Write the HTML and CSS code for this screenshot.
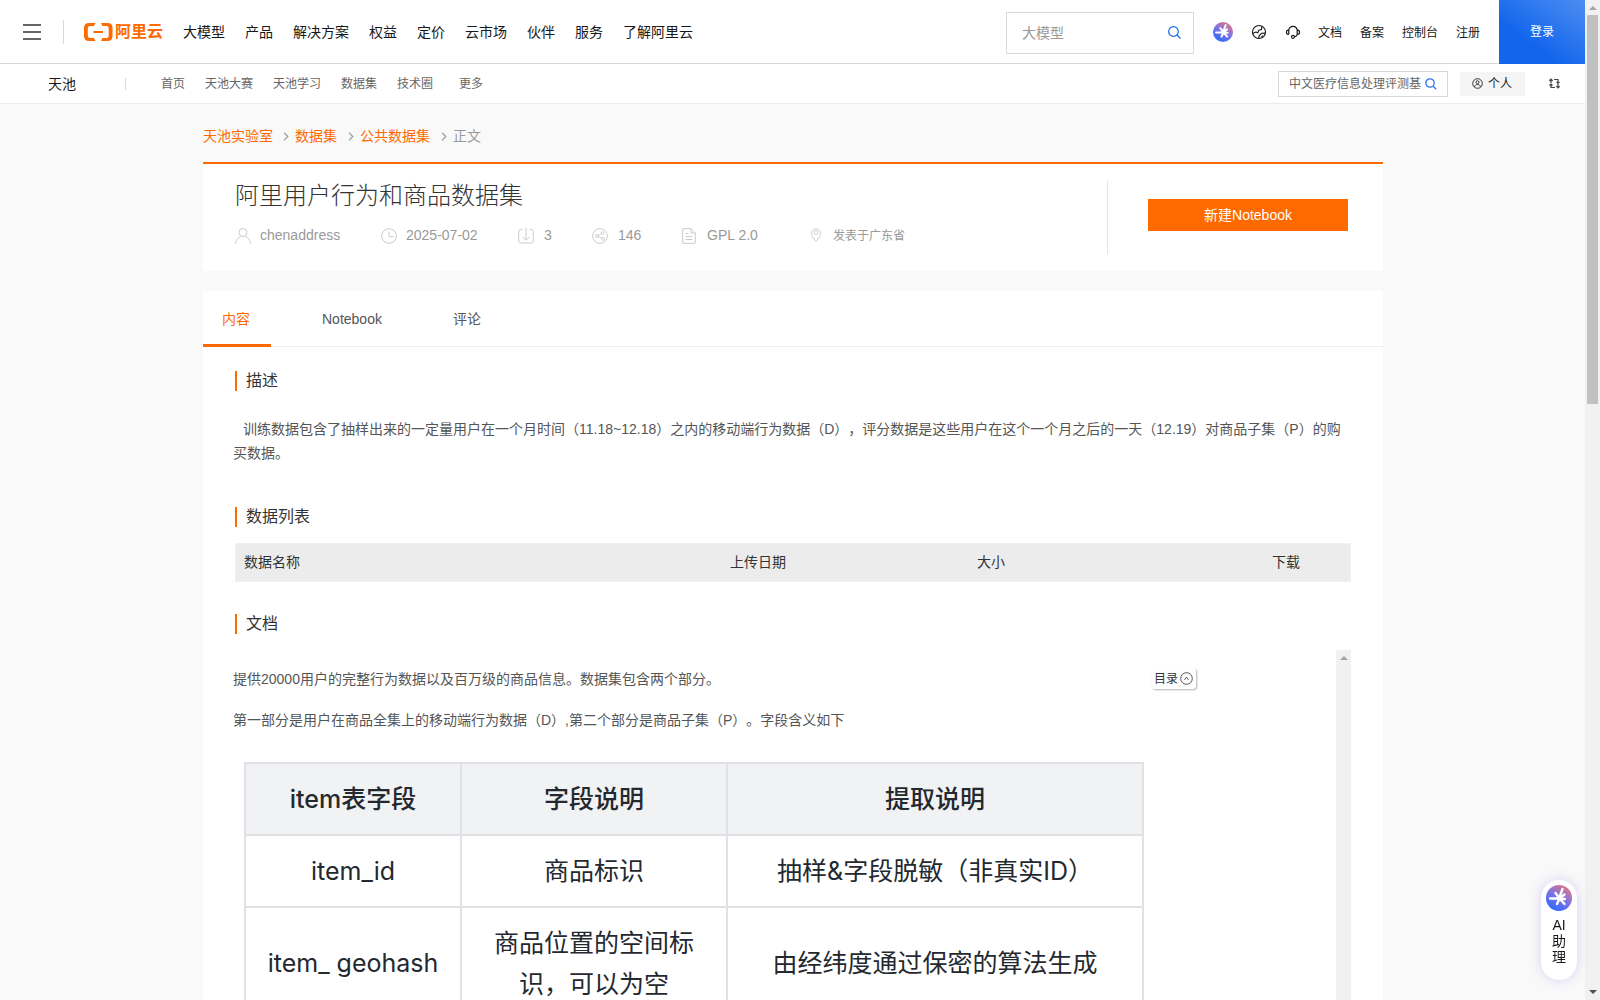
FILE: index.html
```html
<!DOCTYPE html>
<html lang="zh-CN">
<head>
  <meta charset="UTF-8" />
  <meta name="viewport" content="width=device-width, initial-scale=1.0"/>
  <title>阿里用户行为和商品数据集_数据集-阿里云天池</title>
  <link rel="stylesheet" href="styles.css">
</head>
<body>

  <div class="page">
    <header class="topbar">
      <div class="menu-btn"><i></i><i></i><i></i></div>
      <span class="topbar-line"></span>
      <a class="logo">
        <svg width="29" height="18" viewBox="0 0 29 18">
          <path d="M11.500 0L10 3H6Q3.800 3 3.800 5.200v7.600Q3.800 15 6 15h4l1.500 3H5Q0 18 0 13V5Q0 0 5 0zM17 0l1.500 3h4q2.200 0 2.200 2.200v7.600q0 2.200-2.200 2.200h-4L17 18h6.500q5 0 5-5V5q0-5-5-5z" fill="#ff6a00"/>
          <path d="M9.500 9h9.500" stroke="#ff6a00" stroke-width="2"/>
        </svg>
        <span>阿里云</span>
      </a>
      <nav class="main-nav">
        <a>大模型</a><a>产品</a><a>解决方案</a><a>权益</a><a>定价</a><a>云市场</a><a>伙伴</a><a>服务</a><a>了解阿里云</a>
      </nav>
      <div class="search">
        <span>大模型</span>
        <svg width="13" height="13" viewBox="0 0 13 13" fill="none" stroke="#1366ec" stroke-width="1.2"><circle cx="5.500" cy="5.500" r="4.800"/><path d="M9 9l3.500 3.500"/></svg>
      </div>
      <svg class="ai-icon" width="20" height="20" viewBox="0 0 26 26">
        <defs>
          <linearGradient id="ai" x1="0.2" y1="1" x2="0.8" y2="0">
            <stop offset="0" stop-color="#2468ff"/>
            <stop offset="0.5" stop-color="#7a73e8"/>
            <stop offset="1" stop-color="#e8757c"/>
          </linearGradient>
        </defs>
        <circle cx="13" cy="13" r="13" fill="url(#ai)"/>
        <path d="M4 13.500h9M16.500 4l-3.500 9.500M9.500 8l4 5.500 5 5.500M18.500 9.500l-5 4-2.500 5.500M13.500 13.500l5.500.5" stroke="#fff" stroke-width="2.600" stroke-linecap="round" fill="none"/>
      </svg>
      <svg class="globe" width="16" height="16" viewBox="0 0 16 16" fill="none" stroke="#181818" stroke-width="1.100"><circle cx="8" cy="8" r="6.500"/><path d="M1.800 9.500l3-1.500 2 .8 1-2.500 2.700-.8.300-3M7.500 14.500l.8-3 2.300-2.200 3.500-.2M10.500 13.200l1.200-1.500"/></svg>
      <svg class="headset" width="16" height="16" viewBox="0 0 16 16" fill="none" stroke="#181818" stroke-width="1.200"><path d="M3.800 10.300H3.200Q1.500 10.300 1.500 8.200T3.200 6.100h.6M3.800 10.300V6.500a4.200 4.200 0 0 1 8.400 0v3.800M12.200 10.300h.6q1.700 0 1.700-2.100t-1.700-2.100h-.6M12.200 10.300q-.3 1.700-2.200 2.400"/><circle cx="8" cy="12.800" r="1.500"/></svg>
      <nav class="user-nav">
        <a>文档</a><a>备案</a><a>控制台</a><a>注册</a>
      </nav>
      <a class="login">登录</a>
    </header>

    <div class="subbar">
      <a class="subbar-title">天池</a>
      <span class="subbar-line"></span>
      <nav class="sub-nav">
        <a>首页</a><a>天池大赛</a><a>天池学习</a><a>数据集</a><a>技术圈</a><a class="more">更多</a>
      </nav>
      <div class="sub-search">
        <span>中文医疗信息处理评测基</span>
        <svg width="12" height="12" viewBox="0 0 12 12" fill="none" stroke="#2d77ee" stroke-width="1.300"><circle cx="5" cy="5" r="4.200"/><path d="M8 8l3.200 3.200"/></svg>
      </div>
      <a class="personal">
        <svg width="11" height="11" viewBox="0 0 11 11" fill="none" stroke="#333"><circle cx="5.500" cy="5.500" r="4.800"/><circle cx="5.500" cy="4.200" r="1.500"/><path d="M2.500 8.800c.5-3 5.500-3 6 0"/></svg>
        <span>个人</span>
      </a>
      <svg class="switch" width="11" height="11" viewBox="0 0 11 11" fill="none" stroke="#444" stroke-width="1.200"><path d="M2 5V1.500M.3 2.800L2 1l1.700 1.800M5 1.500h4V5M2 6.500v3h4M9 6v3.500M7.300 8.200L9 10l1.700-1.800M7.500 3.800L9 5.300l1.500-1.500M.5 7.500L2 6l1.500 1.500"/></svg>
    </div>

    <main class="container">
      <div class="breadcrumb">
        <a>天池实验室</a>
        <svg width="6" height="9" viewBox="0 0 6 9"><path d="M1 .7l3.800 3.800L1 8.300"/></svg>
        <a class="wide">数据集</a>
        <svg width="6" height="9" viewBox="0 0 6 9"><path d="M1 .7l3.800 3.800L1 8.300"/></svg>
        <a class="wider">公共数据集</a>
        <svg width="6" height="9" viewBox="0 0 6 9"><path d="M1 .7l3.800 3.800L1 8.300"/></svg>
        <span>正文</span>
      </div>

      <section class="info">
        <div class="info-left">
          <h1>阿里用户行为和商品数据集</h1>
          <div class="meta">
            <span class="author"><svg width="16" height="16" viewBox="0 0 16 16"><circle cx="8" cy="4.500" r="4"/><path d="M.5 16c0-4 2.500-6.500 5-7.500M15.500 16c0-4-2.500-6.500-5-7.500"/></svg>chenaddress</span>
            <span class="date"><svg width="16" height="16" viewBox="0 0 16 16"><circle cx="8" cy="8" r="7.300"/><path d="M8 3.500v5h4.500"/></svg>2025-07-02</span>
            <span class="downloads"><svg width="16" height="16" viewBox="0 0 16 16"><path d="M4.500 1.500h-2Q.7 1.500.7 3.500V13q0 2 2 2h10.600q2 0 2-2V3.500q0-2-2-2h-1.800M8 0v12M4.500 8.800L8 12.300l3.500-3.500"/></svg>3</span>
            <span class="shares"><svg width="16" height="16" viewBox="0 0 16 16"><circle cx="8" cy="8" r="7.400"/><circle cx="5" cy="8" r="1.500"/><circle cx="10.500" cy="5" r="1.300"/><circle cx="11" cy="10.800" r="1.500"/><path d="M6.500 7.300l3-1.700M6.500 8.700l3 1.500"/></svg>146</span>
            <span class="license"><svg width="14" height="16" viewBox="0 0 14 16"><path d="M9 .6H2Q.6.6.6 2v12q0 1.400 1.400 1.400h10q1.400 0 1.400-1.400V5zM9 .6V5h4.400M3.500 5.500h3M3.500 8.500h7M3.500 11.500h7"/></svg>GPL 2.0</span>
            <span class="place"><svg width="10" height="14" viewBox="0 0 10 14"><path d="M5 13.400C2 10 .6 7.500.6 5a4.400 4.400 0 0 1 8.800 0c0 2.500-1.400 5-4.400 8.400z"/><circle cx="5" cy="4.500" r="2"/></svg>发表于广东省</span>
          </div>
        </div>
        <div class="info-right"><a class="new-btn">新建Notebook</a></div>
      </section>

      <section class="content">
        <div class="tabs">
          <a class="active">内容</a><a>Notebook</a><a>评论</a>
        </div>
        <div class="block">
          <h2>描述</h2>
          <p class="desc">训练数据包含了抽样出来的一定量用户在一个月时间（11.18~12.18）之内的移动端行为数据（D），评分数据是这些用户在这个一个月之后的一天（12.19）对商品子集（P）的购<br>买数据。</p>
          <h2>数据列表</h2>
          <div class="file-head">
            <span>数据名称</span><span>上传日期</span><span>大小</span><span>下载</span>
          </div>
          <h2>文档</h2>
          <div class="doc">
            <div class="doc-body">
              <p>提供20000用户的完整行为数据以及百万级的商品信息。数据集包含两个部分。</p>
              <p>第一部分是用户在商品全集上的移动端行为数据（D）,第二个部分是商品子集（P）。字段含义如下</p>
              <table>
                <tr><th class="c1">item表字段</th><th class="c2">字段说明</th><th>提取说明</th></tr>
                <tr><td>item_id</td><td>商品标识</td><td>抽样&amp;字段脱敏（非真实ID）</td></tr>
                <tr class="tall"><td>item_ geohash</td><td>商品位置的空间标<br>识，可以为空</td><td>由经纬度通过保密的算法生成</td></tr>
              </table>
            </div>
            <div class="toc">目录<svg width="13" height="13" viewBox="0 0 13 13" fill="none" stroke="#555"><circle cx="6.500" cy="6.500" r="5.800"/><path d="M4.500 7.800l2-2.600 2 2.600"/></svg></div>
            <div class="inner-bar"><i class="arrow-up"></i></div>
          </div>
        </div>
      </section>
    </main>
  </div>

  <div class="scrollbar">
    <i class="arrow-up"></i>
    <div class="thumb"></div>
    <i class="arrow-down"></i>
  </div>

  <div class="assistant">
    <svg width="26" height="26" viewBox="0 0 26 26">
      <circle cx="13" cy="13" r="13" fill="url(#ai)"/>
      <path d="M4 13.500h9M16.500 4l-3.500 9.500M9.500 8l4 5.500 5 5.500M18.500 9.500l-5 4-2.500 5.500M13.500 13.500l5.500.5" stroke="#fff" stroke-width="2.400" stroke-linecap="round" fill="none"/>
    </svg>
    <span>AI</span><span>助</span><span>理</span>
  </div>

</body>
</html>
```
FILE: styles.css
```css
* {
  box-sizing: border-box;
}
body {
  margin: 0;
  display: flex;
  height: 100vh;
  overflow: hidden;
  background: #f9f9f9;
  color: #181818;
  font-family: "Liberation Sans", "Noto Sans CJK SC", sans-serif;
  font-size: 14px;
  line-height: 20px;
  text-spacing-trim: space-all;
}
h1, h2, p {
  margin: 0;
  font-weight: 400;
}
a, span {
  white-space: nowrap;
}
svg {
  display: block;
  flex: none;
}
.page {
  flex: 1;
  min-width: 0;
  height: 100vh;
  overflow: hidden;
}

/* top header */
.topbar {
  display: flex;
  align-items: center;
  height: 64px;
  background: #fff;
  border-bottom: 1px solid #d9d9d9;
}
.menu-btn {
  display: flex;
  flex-direction: column;
  gap: 5px;
  width: 18px;
  margin-left: 23px;
}
.menu-btn i {
  height: 2px;
  background: #666;
}
.topbar-line {
  width: 1px;
  height: 24px;
  margin-left: 22px;
  background: #d9d9d9;
}
.logo {
  display: flex;
  align-items: center;
  gap: 2px;
  width: 80px;
  margin-left: 20px;
  color: #ff6a00;
  font-size: 16px;
  font-weight: 700;
}
.main-nav {
  display: flex;
  gap: 20px;
  margin-left: 19px;
}
.search {
  display: flex;
  align-items: center;
  justify-content: space-between;
  width: 188px;
  height: 42px;
  margin: 2px 0 0 auto;
  padding: 0 12px 0 15px;
  border: 1px solid #d9d9d9;
  color: #999;
}
.ai-icon {
  margin-left: 19px;
}
.globe {
  margin-left: 18px;
}
.headset {
  margin-left: 18px;
}
.user-nav {
  display: flex;
  gap: 18px;
  margin-left: 17px;
  padding-top: 2px;
  font-size: 12px;
}
.login {
  width: 86px;
  height: 64px;
  margin: 0 0 -1px 19px;
  background: linear-gradient(35deg, #1366ec 35%, #4d8df2);
  color: #fff;
  font-size: 12px;
  line-height: 65px;
  text-align: center;
}

/* product bar */
.subbar {
  display: flex;
  align-items: center;
  height: 40px;
  background: #fff;
  border-bottom: 1px solid #ebebeb;
  font-size: 12px;
}
.subbar-title {
  margin-left: 48px;
  font-size: 14px;
}
.subbar-line {
  width: 1px;
  height: 12px;
  margin-left: 49px;
  background: #d9d9d9;
}
.sub-nav {
  display: flex;
  gap: 20px;
  margin-left: 35px;
  padding-top: 1px;
  color: #666;
}
.sub-nav .more {
  margin-left: 6px;
}
.sub-search {
  display: flex;
  align-items: center;
  justify-content: space-between;
  width: 170px;
  height: 26px;
  margin-left: auto;
  padding: 0 10px;
  border: 1px solid #d9d9d9;
  color: #666;
}
.personal {
  display: flex;
  align-items: center;
  gap: 5px;
  width: 65px;
  height: 24px;
  margin-left: 12px;
  padding-left: 12px;
  background: #f5f5f5;
}
.switch {
  margin: 0 25px 0 24px;
}

.container {
  width: 1180px;
  margin-left: 203px;
}
.breadcrumb {
  display: flex;
  align-items: center;
  height: 58px;
  padding-top: 5px;
  color: #999;
}
.breadcrumb a {
  color: #ff6a00;
}
.breadcrumb a.wide {
  width: 43px;
}
.breadcrumb a.wider {
  width: 71px;
}
.breadcrumb svg {
  margin: 2px 6px 0 10px;
  fill: none;
  stroke: #999;
  stroke-width: 1.2;
}

/* dataset info card */
.info {
  display: flex;
  height: 109px;
  background: #fff;
  border-top: 2px solid #ff6a00;
}
.info-left {
  width: 904px;
  padding: 15px 0 0 32px;
}
.info h1 {
  color: #333;
  font-size: 24px;
  font-weight: 300;
  line-height: 34px;
}
.meta {
  display: flex;
  align-items: center;
  height: 20px;
  margin-top: 13px;
  color: #999;
}
.meta span {
  display: flex;
  gap: 9px;
  flex: none;
  height: 20px;
  line-height: 19px;
}
.meta svg {
  margin-top: 2px;
  fill: none;
  stroke: #ccc;
}
.meta .author {
  width: 146px;
}
.meta .date {
  width: 137px;
}
.meta .downloads {
  width: 74px;
  gap: 10px;
}
.meta .shares {
  width: 90px;
  gap: 10px;
}
.meta .license {
  width: 129px;
  gap: 11px;
}
.meta .place {
  gap: 12px;
  font-size: 12px;
  line-height: 21px;
}
.info-right {
  height: 73px;
  margin-top: 17px;
  padding: 18px 0 0 40px;
  border-left: 1px solid #e5e5e5;
}
.new-btn {
  display: block;
  width: 200px;
  height: 32px;
  background: #ff6a00;
  color: #fff;
  line-height: 32px;
  text-align: center;
}

/* tabs and blocks */
.content {
  height: 760px;
  margin-top: 20px;
  background: #fff;
}
.tabs {
  display: flex;
  gap: 32px;
  height: 56px;
  border-bottom: 1px solid #eee;
  color: #555;
  line-height: 56px;
}
.tabs a {
  height: 56px;
  padding: 0 20px 0 19px;
}
.tabs a.active {
  padding-right: 21px;
  border-bottom: 3px solid #ff6a00;
  color: #ff6a00;
}
.block {
  padding: 24px 32px 0;
}
.block h2 {
  height: 20px;
  padding-left: 9px;
  border-left: 2px solid #ff6a00;
  color: #333;
  font-size: 16px;
  line-height: 19px;
}
.desc {
  margin: 26px -20px 42px -2px;
  color: #555;
  line-height: 24px;
  text-indent: 10px;
  white-space: nowrap;
}
.file-head {
  display: grid;
  grid-template-columns: 486px 247px 295px auto;
  height: 39px;
  margin: 16px 0 32px;
  padding-left: 8px;
  border: 1px solid #f1f1f1;
  background: #ececec;
  color: #333;
  line-height: 37px;
}
.doc {
  display: flex;
  position: relative;
  height: 360px;
  margin-top: 16px;
}
.doc-body {
  flex: 1;
  margin-left: -2px;
  padding-top: 17px;
}
.doc p {
  height: 24px;
  margin-bottom: 17px;
  color: #555;
  line-height: 24px;
}
.doc table {
  width: 900px;
  margin: 30px 0 0 11px;
  border-collapse: collapse;
  table-layout: fixed;
  color: #24292f;
  font-family: Inter, "Noto Sans CJK SC", sans-serif;
  font-size: 25px;
  line-height: 41px;
  text-align: center;
}
.doc th, .doc td {
  height: 72px;
  padding: 0;
  border: 2px solid #dfe1e5;
}
.doc th {
  background: #f1f2f4;
  font-weight: 500;
}
.doc .c1 {
  width: 216px;
}
.doc .c2 {
  width: 266px;
}
.doc .tall td {
  height: 113px;
}
.toc {
  display: flex;
  align-items: center;
  gap: 2px;
  position: absolute;
  top: 18px;
  left: 917px;
  height: 21px;
  padding: 0 3px 0 2px;
  border-radius: 3px;
  box-shadow: 1px 1px 2px rgba(0, 0, 0, 0.3);
  background: #fff;
  color: #333;
  font-size: 12px;
}
.inner-bar {
  width: 15px;
  padding-top: 6px;
  background: #f1f1f1;
}

/* page scrollbar */
.scrollbar {
  display: flex;
  flex-direction: column;
  width: 15px;
  padding: 6px 0;
  background: #f1f1f1;
}
.thumb {
  width: 11px;
  height: 389px;
  margin: 5px 0 auto 2px;
  background: #c1c1c1;
}
.arrow-up, .arrow-down {
  display: block;
  width: 0;
  margin: 0 auto;
  border: 4px solid transparent;
}
.arrow-up {
  border-top: 0;
  border-bottom-color: #a3a3a3;
}
.arrow-down {
  border-bottom: 0;
  border-top-color: #505050;
}

.assistant {
  display: flex;
  flex-direction: column;
  align-items: center;
  position: fixed;
  top: 880px;
  left: 1541px;
  width: 36px;
  height: 100px;
  padding-top: 5px;
  border-radius: 18px;
  box-shadow: 0 0 12px rgba(110, 90, 230, 0.25);
  background: #fff;
  line-height: 16px;
}
.assistant svg {
  margin-bottom: 6px;
}
```
